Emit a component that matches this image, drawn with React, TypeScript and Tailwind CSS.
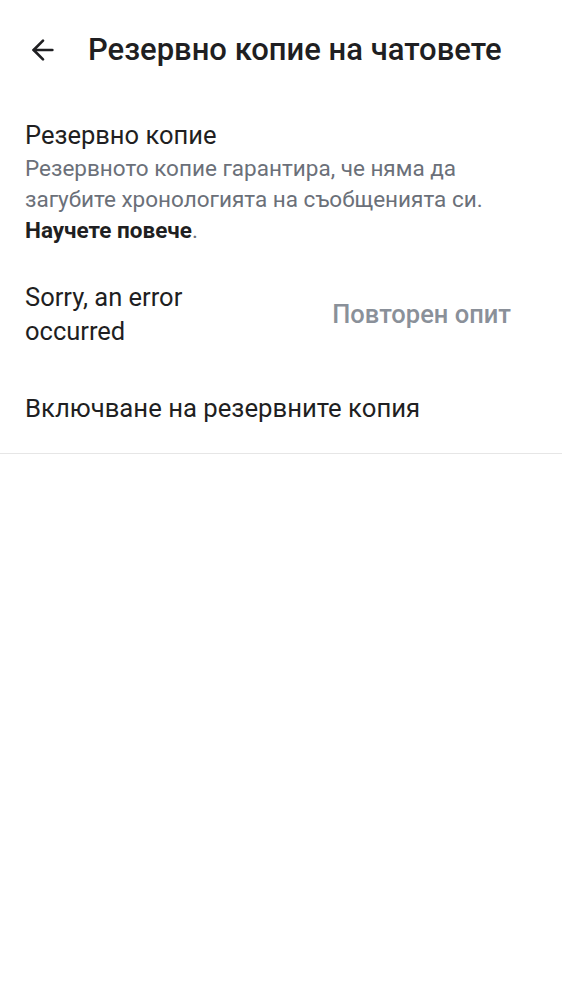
import { ArrowLeft } from "lucide-react";

export default function App() {
  return (
    <div className="min-h-screen bg-white text-[#1f1f22]" style={{ fontFamily: "Roboto, 'Noto Sans', sans-serif" }}>
      <header className="flex h-[100px] items-center px-[27px]">
        <ArrowLeft className="h-[32px] w-[32px]" strokeWidth={2} />
        <h1 className="ml-[29px] text-[31px] font-medium">Резервно копие на чатовете</h1>
      </header>

      <section className="px-[25px] pt-[20px]">
        <div className="text-[25.5px] leading-[30px]">Резервно копие</div>
        <p className="mt-[3px] pr-[20px] text-[22.5px] leading-[31px] text-[#6b7079]">
          Резервното копие гарантира, че няма да загубите хронологията на съобщенията си.{" "}
          <span className="font-bold text-[#1f1f22]">Научете повече</span>.
        </p>
      </section>

      <section className="flex items-center justify-between px-[25px] pt-[34px]">
        <div className="w-[220px] text-[25.5px] leading-[34px]">Sorry, an error occurred</div>
        <button className="mr-[26px] text-[25.5px] font-medium text-[#8a9099]">Повторен опит</button>
      </section>

      <div className="px-[25px] pb-[30px] pt-[45px] text-[25.7px] leading-[30px]">Включване на резервните копия</div>
      <div className="h-px bg-[#e6e6e6]" />
    </div>
  );
}
